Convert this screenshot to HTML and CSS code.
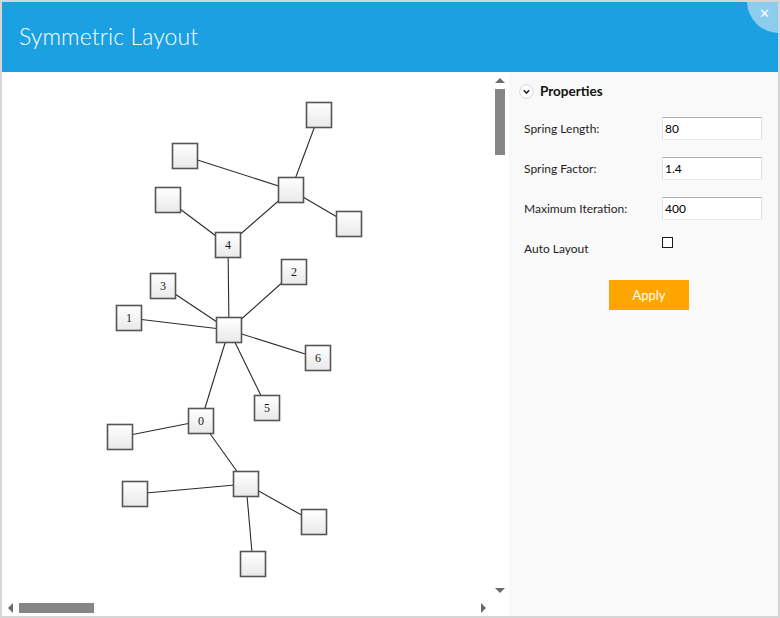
FILE: index.html
```html
<!DOCTYPE html>
<html>
<head>
<meta charset="utf-8">
<link rel="stylesheet" href="styles.css">
</head>
<body>
<div class="window">
  <header class="titlebar">
    <h1 class="title">Symmetric Layout</h1>
    <div class="close-bg"></div>
    <span class="close-x">&#x2715;</span>
  </header>
  <div class="content">
    <div class="diagram">
      <div class="viewport">
        <svg class="graph" width="490" height="527" viewBox="2 72 490 527" xmlns="http://www.w3.org/2000/svg">
          <defs>
            <linearGradient id="nodefill" x1="0" y1="0" x2="0" y2="1">
              <stop offset="0" stop-color="#ffffff"/>
              <stop offset="1" stop-color="#e9e9e9"/>
            </linearGradient>
          </defs>
          <g class="edges">
            <line x1="319" y1="115" x2="291" y2="190"/>
            <line x1="185" y1="156" x2="291" y2="190"/>
            <line x1="349" y1="224" x2="291" y2="190"/>
            <line x1="291" y1="190" x2="228" y2="245"/>
            <line x1="168" y1="200" x2="228" y2="245"/>
            <line x1="228" y1="245" x2="229" y2="330"/>
            <line x1="163" y1="286" x2="229" y2="330"/>
            <line x1="294" y1="272" x2="229" y2="330"/>
            <line x1="129" y1="318" x2="229" y2="330"/>
            <line x1="318" y1="358" x2="229" y2="330"/>
            <line x1="267" y1="408" x2="229" y2="330"/>
            <line x1="201" y1="421" x2="229" y2="330"/>
            <line x1="201" y1="421" x2="120" y2="437"/>
            <line x1="201" y1="421" x2="246" y2="484"/>
            <line x1="135" y1="494" x2="246" y2="484"/>
            <line x1="314" y1="522" x2="246" y2="484"/>
            <line x1="253" y1="564" x2="246" y2="484"/>
          </g>
          <g class="nodes">
            <rect x="306.5" y="102.5" width="25" height="25"/>
            <rect x="172.5" y="143.5" width="25" height="25"/>
            <rect x="278.5" y="177.5" width="25" height="25"/>
            <rect x="336.5" y="211.5" width="25" height="25"/>
            <rect x="155.5" y="187.5" width="25" height="25"/>
            <rect x="215.5" y="232.5" width="25" height="25"/>
            <rect x="150.5" y="273.5" width="25" height="25"/>
            <rect x="281.5" y="259.5" width="25" height="25"/>
            <rect x="116.5" y="305.5" width="25" height="25"/>
            <rect x="216.5" y="317.5" width="25" height="25"/>
            <rect x="305.5" y="345.5" width="25" height="25"/>
            <rect x="254.5" y="395.5" width="25" height="25"/>
            <rect x="188.5" y="408.5" width="25" height="25"/>
            <rect x="107.5" y="424.5" width="25" height="25"/>
            <rect x="233.5" y="471.5" width="25" height="25"/>
            <rect x="122.5" y="481.5" width="25" height="25"/>
            <rect x="301.5" y="509.5" width="25" height="25"/>
            <rect x="240.5" y="551.5" width="25" height="25"/>
          </g>
          <g class="labels">
            <text x="228" y="249">4</text>
            <text x="163" y="290">3</text>
            <text x="294" y="276">2</text>
            <text x="129" y="322">1</text>
            <text x="318" y="362">6</text>
            <text x="267" y="412">5</text>
            <text x="201" y="425">0</text>
          </g>
        </svg>
      </div>
      <div class="vscroll">
        <span class="arrow arrow-up"></span>
        <span class="vthumb"></span>
        <span class="arrow arrow-down"></span>
      </div>
      <div class="hscroll">
        <span class="arrow arrow-left"></span>
        <span class="hthumb"></span>
        <span class="arrow arrow-right"></span>
      </div>
      <div class="corner"></div>
    </div>
    <aside class="panel">
      <div class="panel-head">
        <span class="expander">
          <svg width="15" height="15" viewBox="0 0 15 15"><circle cx="7.5" cy="7.5" r="6.8" fill="#fff" stroke="#d6d6d6" stroke-width="1"/><path d="M4.8 6.3 L7.5 9 L10.2 6.3" fill="none" stroke="#222" stroke-width="1.6"/></svg>
        </span>
        <span class="panel-title">Properties</span>
      </div>
      <div class="form">
        <div class="row"><label class="lbl">Spring Length:</label><input class="field" type="text" value="80"></div>
        <div class="row"><label class="lbl">Spring Factor:</label><input class="field" type="text" value="1.4"></div>
        <div class="row"><label class="lbl">Maximum Iteration:</label><input class="field" type="text" value="400"></div>
        <div class="row row-check"><label class="lbl lbl-check">Auto Layout</label><span class="check"></span></div>
      </div>
      <button class="apply">Apply</button>
    </aside>
  </div>
</div>
</body>
</html>
```
FILE: styles.css
```css
html, body {
  margin: 0;
  padding: 0;
  background: #ffffff;
}
.window {
  width: 780px;
  height: 618px;
  box-sizing: border-box;
  border: 2px solid #d6d6d6;
  display: flex;
  flex-direction: column;
  font-family: "Lato", "Open Sans", sans-serif;
  overflow: hidden;
}
.titlebar {
  position: relative;
  height: 70px;
  flex: none;
  background: #1ba1e2;
  overflow: hidden;
  display: flex;
  align-items: center;
}
.title {
  margin: 0 0 3px 17px;
  font-family: "Lato", "Open Sans", sans-serif;
  font-weight: 300;
  font-size: 23px;
  color: #ffffff;
  letter-spacing: 0.1px;
}
.close-bg {
  position: absolute;
  right: -33px;
  top: -33px;
  width: 64px;
  height: 64px;
  border-radius: 50%;
  background: #8ccdee;
}
.close-x {
  position: absolute;
  left: 757px;
  top: 4px;
  font-family: "DejaVu Sans", sans-serif;
  font-size: 13px;
  font-weight: bold;
  color: #ffffff;
}
.content {
  flex: 1;
  display: flex;
  min-height: 0;
}
.diagram {
  width: 507px;
  flex: none;
  display: grid;
  grid-template-columns: 490px 17px;
  grid-template-rows: 527px 17px;
  background: #ffffff;
}
.viewport {
  overflow: hidden;
}
.graph {
  display: block;
}
.edges line {
  stroke: #2b2b2b;
  stroke-width: 1.1;
}
.nodes rect {
  fill: url(#nodefill);
  stroke: #555555;
  stroke-width: 1.6;
}
.labels text {
  font-family: "Liberation Serif", serif;
  font-size: 12px;
  fill: #1a1a1a;
  text-anchor: middle;
}
.vscroll {
  display: flex;
  flex-direction: column;
  align-items: center;
  padding: 6px 0 6px 0;
  box-sizing: border-box;
}
.vthumb {
  width: 10px;
  height: 66px;
  margin-top: 6px;
  margin-left: -1px;
  background: #868686;
}
.hscroll {
  display: flex;
  align-items: center;
  padding: 0 6px;
  box-sizing: border-box;
}
.hthumb {
  width: 75px;
  height: 10px;
  margin-left: 6px;
  background: #868686;
}
.arrow {
  width: 0;
  height: 0;
  display: block;
}
.arrow-up {
  border-left: 5px solid transparent;
  border-right: 5px solid transparent;
  border-bottom: 5px solid #6a6a6a;
  margin-left: -1px;
}
.arrow-down {
  margin-top: auto;
  margin-left: -1px;
  border-left: 5px solid transparent;
  border-right: 5px solid transparent;
  border-top: 5px solid #6a6a6a;
}
.arrow-left {
  border-top: 5px solid transparent;
  border-bottom: 5px solid transparent;
  border-right: 5px solid #6a6a6a;
}
.arrow-right {
  margin-left: auto;
  border-top: 5px solid transparent;
  border-bottom: 5px solid transparent;
  border-left: 5px solid #6a6a6a;
}
.corner {
  background: #ffffff;
}
.panel {
  flex: 1;
  background: #f9f9f9;
  padding: 10px 0 0 15px;
  box-sizing: border-box;
  color: #1e1e1e;
}
.panel-head {
  height: 18px;
  display: flex;
  align-items: center;
  margin-left: -5px;
}
.expander {
  width: 15px;
  height: 15px;
  display: block;
}
.expander svg {
  display: block;
}
.panel-title {
  margin-left: 6px;
  font-weight: bold;
  font-size: 13.5px;
  color: #111111;
}
.form {
  margin-top: 17px;
  display: flex;
  flex-direction: column;
  gap: 17px;
}
.row {
  height: 23px;
  display: flex;
  align-items: center;
}
.lbl {
  width: 138px;
  font-size: 12px;
  color: #1e1e1e;
  margin-top: -1px;
}
.field {
  width: 100px;
  height: 23px;
  box-sizing: border-box;
  margin: 0;
  padding: 0 2px;
  border: 1px solid;
  border-color: #abadb3 #dbdfe6 #e3e9ef #e2e3ea;
  background: #ffffff;
  font-family: "Lato", "Open Sans", sans-serif;
  font-size: 12px;
  color: #000000;
  outline: none;
}
.row-check {
  align-items: flex-start;
}
.lbl-check {
  margin-top: 4px;
}
.check {
  width: 11px;
  height: 11px;
  box-sizing: border-box;
  border: 1px solid #1a1a1a;
  background: #ffffff;
  display: block;
}
.apply {
  display: block;
  margin: 20px 0 0 85px;
  width: 80px;
  height: 30px;
  border: none;
  background: #ffa500;
  color: #ffffff;
  font-family: "Lato", "Open Sans", sans-serif;
  font-size: 13px;
  padding: 0;
}
```
